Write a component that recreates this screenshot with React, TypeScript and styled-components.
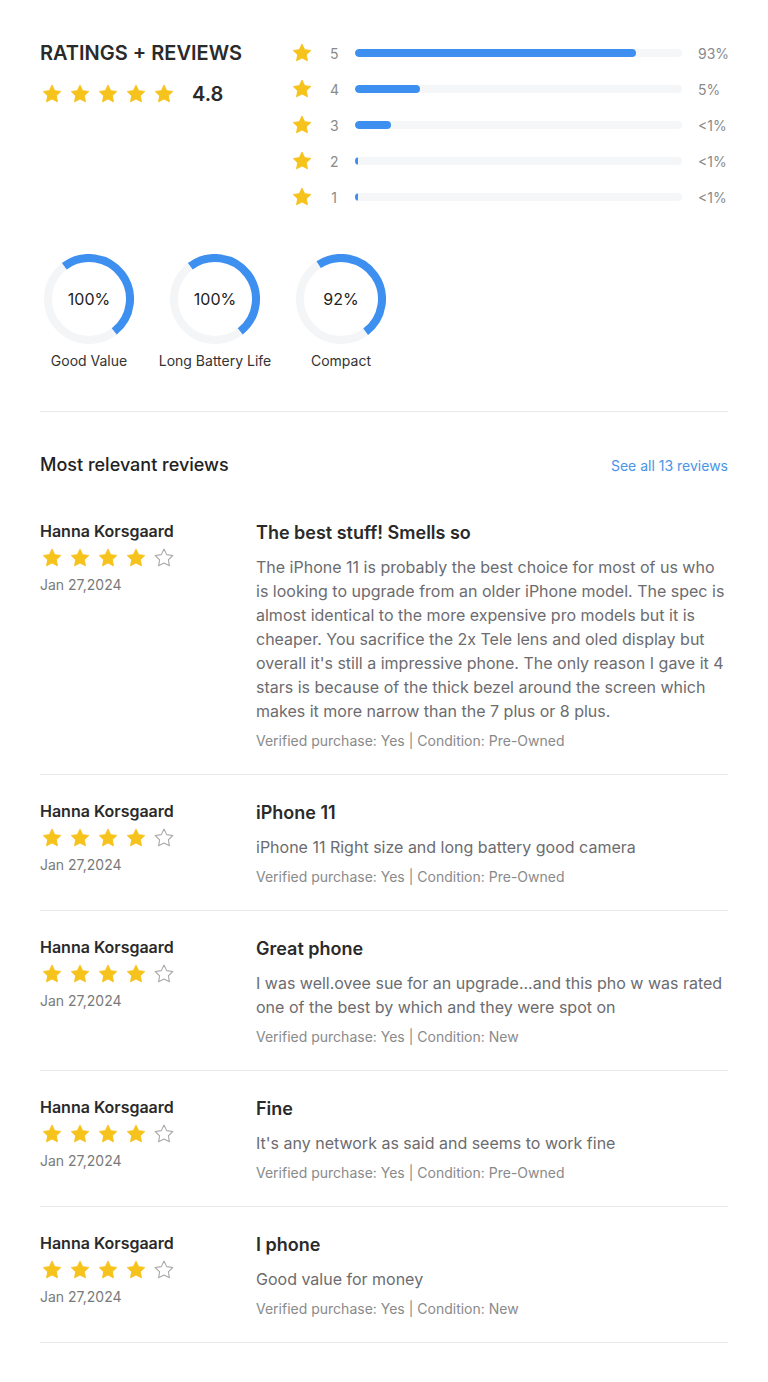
import React from "react";
import styled, { createGlobalStyle } from "styled-components";

const GlobalStyle = createGlobalStyle`
  * { box-sizing: border-box; }
  html, body { margin: 0; padding: 0; background: #fff; }
  body { font-family: Inter, "Noto Sans", sans-serif; color: #222; -webkit-font-smoothing: antialiased; }
`;

const Page = styled.div`
  width: 768px;
  padding: 41px 40px 40px;
`;

const Top = styled.section`
  display: flex;
  align-items: flex-start;
`;

const Summary = styled.div`
  width: 252px;
  display: flex;
  flex-direction: column;
  gap: 17px;
`;

const Heading = styled.h1`
  margin: 0;
  font-size: 20px;
  line-height: 24px;
  font-weight: 600;
  color: #2a2a2a;
`;

const StarsRow = styled.div`
  display: flex;
  align-items: center;
  gap: 8px;
`;

const HeaderStars = styled(StarsRow)`
  padding-left: 2px;
`;

const Score = styled.span`
  margin-left: 10px;
  font-size: 20px;
  line-height: 24px;
  font-weight: 600;
  color: #2a2a2a;
`;

const Histogram = styled.div`
  flex: 1;
  display: flex;
  flex-direction: column;
  gap: 12px;
`;

const HistRow = styled.div`
  display: flex;
  align-items: center;
  height: 24px;
`;

const HistLabel = styled.span`
  width: 8px;
  margin-left: 18px;
  margin-right: 17px;
  font-size: 14px;
  color: #8a8a8a;
  text-align: center;
`;

const Track = styled.div`
  flex: 1;
  height: 8px;
  border-radius: 4px;
  background: #f5f6f8;
  overflow: hidden;
`;

const Fill = styled.div`
  height: 100%;
  min-width: 3px;
  border-radius: 4px;
  background: #3d8ff0;
`;

const Percent = styled.span`
  width: 30px;
  margin-left: 16px;
  font-size: 14px;
  color: #8a8a8a;
  white-space: nowrap;
`;

const Attributes = styled.div`
  display: flex;
  gap: 36px;
  margin-top: 45px;
  padding-left: 4px;
`;

const Attribute = styled.div`
  width: 90px;
  display: flex;
  flex-direction: column;
  align-items: center;
  gap: 8px;
`;

const Ring = styled.div`
  position: relative;
  width: 90px;
  height: 90px;
`;

const RingValue = styled.span`
  position: absolute;
  inset: 0;
  display: flex;
  align-items: center;
  justify-content: center;
  font-size: 16px;
  color: #222;
`;

const AttrLabel = styled.span`
  font-size: 14px;
  line-height: 18px;
  color: #333;
  white-space: nowrap;
`;

const Divider = styled.hr`
  margin: 41px 0 0;
  border: 0;
  height: 1px;
  background: #e9e9eb;
`;

const ListHeader = styled.div`
  display: flex;
  justify-content: space-between;
  align-items: center;
  margin-top: 41px;
  margin-bottom: 18px;
`;

const ListTitle = styled.h2`
  margin: 0;
  font-size: 18px;
  line-height: 24px;
  font-weight: 500;
  color: #222;
`;

const SeeAll = styled.a`
  font-size: 14px;
  color: #4a94e6;
  text-decoration: none;
`;

const Review = styled.article`
  display: flex;
  padding: 26px 0 23px;
  border-bottom: 1px solid #e9e9eb;
`;

const Author = styled.div`
  width: 216px;
  flex-shrink: 0;
  display: flex;
  flex-direction: column;
`;

const Name = styled.span`
  font-size: 16px;
  line-height: 20px;
  font-weight: 600;
  color: #2a2a2a;
`;

const AuthorStars = styled(StarsRow)`
  margin-top: 7px;
  padding-left: 2px;
`;

const DateText = styled.span`
  margin-top: 8px;
  font-size: 14px;
  line-height: 18px;
  color: #7a7a7a;
`;

const Content = styled.div`
  flex: 1;
  display: flex;
  flex-direction: column;
`;

const Title = styled.h3`
  margin: 0;
  font-size: 18px;
  line-height: 24px;
  font-weight: 600;
  color: #2a2a2a;
`;

const Body = styled.p`
  margin: 10px 0 0;
  font-size: 16px;
  line-height: 24px;
  color: #6c6c70;
`;

const Meta = styled.span`
  margin-top: 8px;
  font-size: 14px;
  line-height: 20px;
  color: #8a8a8a;
`;

const STAR_PATH =
  "M12 2.2l2.95 6.1 6.7.95-4.85 4.7 1.15 6.65L12 17.45l-5.95 3.15 1.15-6.65-4.85-4.7 6.7-.95L12 2.2z";

const Star: React.FC<{ filled?: boolean }> = ({ filled = true }) => (
  <svg width="20" height="20" viewBox="1 1 22 22">
    <path
      d={STAR_PATH}
      fill={filled ? "#f6c21c" : "none"}
      stroke={filled ? "#f6c21c" : "#a8a8a8"}
      strokeWidth={filled ? 1 : 1.2}
      strokeLinejoin="round"
    />
  </svg>
);

const Stars: React.FC<{ count: number }> = ({ count }) => (
  <>
    {[0, 1, 2, 3, 4].map((i) => (
      <Star key={i} filled={i < count} />
    ))}
  </>
);

const point = (deg: number, r: number) => {
  const rad = (deg * Math.PI) / 180;
  return [45 + r * Math.sin(rad), 45 - r * Math.cos(rad)];
};

const RingArc: React.FC<{ start: number; end: number }> = ({ start, end }) => {
  const [x1, y1] = point(start, 41);
  const [x2, y2] = point(end, 41);
  const large = end - start > 180 ? 1 : 0;
  return (
    <svg width="90" height="90" viewBox="0 0 90 90">
      <circle cx="45" cy="45" r="41" fill="none" stroke="#f4f5f7" strokeWidth="8" />
      <path
        d={`M${x1} ${y1} A41 41 0 ${large} 1 ${x2} ${y2}`}
        fill="none"
        stroke="#3d8ff0"
        strokeWidth="8"
      />
    </svg>
  );
};

const histogram = [
  { star: 5, fill: 86, pct: "93%" },
  { star: 4, fill: 20, pct: "5%" },
  { star: 3, fill: 11, pct: "<1%" },
  { star: 2, fill: 0.5, pct: "<1%" },
  { star: 1, fill: 0.5, pct: "<1%" },
];

const attributes = [
  { label: "Good Value", value: "100%", start: -37, end: 142 },
  { label: "Long Battery Life", value: "100%", start: -37, end: 142 },
  { label: "Compact", value: "92%", start: -33, end: 143 },
];

const reviews = [
  {
    title: "The best stuff! Smells so",
    body:
      "The iPhone 11 is probably the best choice for most of us who is looking to upgrade from an older iPhone model. The spec is almost identical to the more expensive pro models but it is cheaper. You sacrifice the 2x Tele lens and oled display but overall it's still a impressive phone. The only reason I gave it 4 stars is because of the thick bezel around the screen which makes it more narrow than the 7 plus or 8 plus.",
    condition: "Pre-Owned",
  },
  {
    title: "iPhone 11",
    body: "iPhone 11 Right size and long battery good camera",
    condition: "Pre-Owned",
  },
  {
    title: "Great phone",
    body:
      "I was well.ovee sue for an upgrade...and this pho w was rated one of the best by which and they were spot on",
    condition: "New",
  },
  {
    title: "Fine",
    body: "It's any network as said and seems to work fine",
    condition: "Pre-Owned",
  },
  {
    title: "I phone",
    body: "Good value for money",
    condition: "New",
  },
];

export default function App() {
  return (
    <Page>
      <GlobalStyle />
      <Top>
        <Summary>
          <Heading>RATINGS + REVIEWS</Heading>
          <HeaderStars>
            <Stars count={5} />
            <Score>4.8</Score>
          </HeaderStars>
        </Summary>
        <Histogram>
          {histogram.map((h) => (
            <HistRow key={h.star}>
              <Star />
              <HistLabel>{h.star}</HistLabel>
              <Track>
                <Fill style={{ width: `${h.fill}%` }} />
              </Track>
              <Percent>{h.pct}</Percent>
            </HistRow>
          ))}
        </Histogram>
      </Top>

      <Attributes>
        {attributes.map((a) => (
          <Attribute key={a.label}>
            <Ring>
              <RingArc start={a.start} end={a.end} />
              <RingValue>{a.value}</RingValue>
            </Ring>
            <AttrLabel>{a.label}</AttrLabel>
          </Attribute>
        ))}
      </Attributes>

      <Divider />

      <ListHeader>
        <ListTitle>Most relevant reviews</ListTitle>
        <SeeAll href="#">See all 13 reviews</SeeAll>
      </ListHeader>

      {reviews.map((r) => (
        <Review key={r.title}>
          <Author>
            <Name>Hanna Korsgaard</Name>
            <AuthorStars>
              <Stars count={4} />
            </AuthorStars>
            <DateText>Jan 27,2024</DateText>
          </Author>
          <Content>
            <Title>{r.title}</Title>
            <Body>{r.body}</Body>
            <Meta>Verified purchase: Yes | Condition: {r.condition}</Meta>
          </Content>
        </Review>
      ))}
    </Page>
  );
}
